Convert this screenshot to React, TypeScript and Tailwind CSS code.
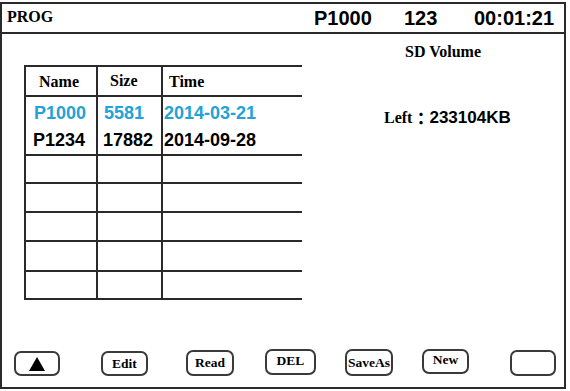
import React from "react";

const serif = "font-['Liberation_Serif',_'Times_New_Roman',_serif] font-bold";
const sans = "font-['Liberation_Sans',_Arial,_sans-serif] font-bold";

function Btn({ cls, textCls, children }: { cls: string; textCls?: string; children?: React.ReactNode }) {
  return (
    <div
      className={`flex items-center justify-center border-2 border-[#3a3a3a] rounded-[7px] bg-white ${cls}`}
    >
      <span className={`${serif} text-[13.5px] leading-[14px] text-black ${textCls ?? ""}`}>{children}</span>
    </div>
  );
}

export default function App() {
  const emptyHeights = ["h-[28px]", "h-[29px]", "h-[29px]", "h-[30px]", "h-[28px]"];
  return (
    <div className="w-[570px] h-[391px] bg-white overflow-hidden pt-[2px]">
      <div className="w-[566px] h-[387px] border-2 border-[#2a2a2a] flex flex-col">
        {/* header */}
        <div className="h-[30px] border-b-2 border-[#2a2a2a] flex items-center shrink-0">
          <span className={`${serif} text-[16px] leading-[18px] text-black w-[312px] pl-[5px] pb-[2px]`}>PROG</span>
          <span className={`${sans} text-[20px] leading-[22px] text-black w-[90px]`}>P1000</span>
          <span className={`${sans} text-[20px] leading-[22px] text-black w-[70px]`}>123</span>
          <span className={`${sans} text-[20px] leading-[22px] text-black`}>00:01:21</span>
        </div>

        {/* body */}
        <div className="h-[315px] flex shrink-0">
          <div className="ml-[22px] mt-[31px] w-[278px] border-t-2 border-l-2 border-[#2a2a2a] self-start">
            <div className="flex h-[30px] border-b-2 border-[#2a2a2a]">
              <div className={`w-[72px] border-r-2 border-[#2a2a2a] flex items-center pl-[13px] pt-[2px] ${serif} text-[16px] text-black`}>Name</div>
              <div className={`w-[65px] border-r-2 border-[#2a2a2a] flex items-center pl-[12px] ${serif} text-[16px] text-black`}>Size</div>
              <div className={`flex-1 flex items-center pl-[6px] pt-[2px] ${serif} text-[16px] text-black`}>Time</div>
            </div>
            <div className={`flex h-[59px] border-b-2 border-[#2a2a2a] ${sans} text-[18px] leading-[27px]`}>
              <div className="w-[72px] border-r-2 border-[#2a2a2a] pt-[3px] pl-[8px]">
                <div className="text-[#22a2d6]">P1000</div>
                <div className="text-black -ml-[1px]">P1234</div>
              </div>
              <div className="w-[65px] border-r-2 border-[#2a2a2a] pt-[3px] pl-[6px]">
                <div className="text-[#22a2d6]">5581</div>
                <div className="text-black -ml-[1px]">17882</div>
              </div>
              <div className="flex-1 pt-[3px] pl-[1px]">
                <div className="text-[#22a2d6]">2014-03-21</div>
                <div className="text-black">2014-09-28</div>
              </div>
            </div>
            {emptyHeights.map((h, i) => (
              <div key={i} className={`flex ${h} border-b-2 border-[#2a2a2a]`}>
                <div className="w-[72px] border-r-2 border-[#2a2a2a]" />
                <div className="w-[65px] border-r-2 border-[#2a2a2a]" />
                <div className="flex-1" />
              </div>
            ))}
          </div>

          <div className="ml-[82px] flex flex-col">
            <div className={`${serif} text-[16px] leading-[18px] text-black mt-[9px] ml-[21px]`}>SD Volume</div>
            <div className="mt-[47px] flex items-center text-black leading-[20px]">
              <span className={`${serif} text-[16px]`}>Left</span>
              <span className="font-['Noto_Sans_CJK_TC',_sans-serif] font-bold text-[17px]">：</span>
              <span className={`${sans} text-[17px]`}>233104KB</span>
            </div>
          </div>
        </div>

        {/* buttons */}
        <div className="flex items-start flex-1">
          <Btn cls="ml-[12px] mt-[2px] w-[46px] h-[25px]">
            <svg width="16" height="14" viewBox="0 0 16 14" className="block">
              <polygon points="8,0 16,14 0,14" fill="#000" />
            </svg>
          </Btn>
          <Btn cls="ml-[41px] mt-[2px] w-[47px] h-[25px]" textCls="pt-[1px]">Edit</Btn>
          <Btn cls="ml-[38px] mt-[1px] w-[48px] h-[26px]">Read</Btn>
          <Btn cls="ml-[31px] mt-0 w-[51px] h-[26px]" textCls="pb-[2px]">DEL</Btn>
          <Btn cls="ml-[29px] mt-0 w-[48px] h-[27px]">SaveAs</Btn>
          <Btn cls="ml-[29px] mt-0 w-[47px] h-[25px]" textCls="pb-[3px]">New</Btn>
          <Btn cls="ml-[41px] mt-[1px] w-[46px] h-[26px]" />
        </div>
      </div>
    </div>
  );
}
